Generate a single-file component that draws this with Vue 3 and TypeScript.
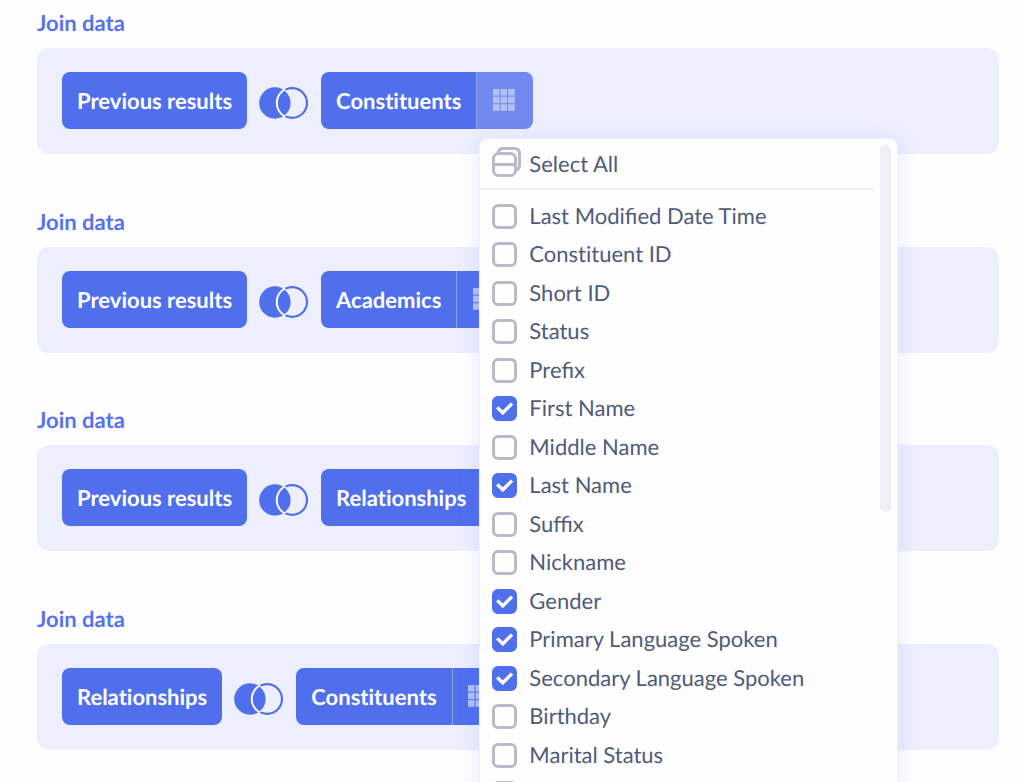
<script setup lang="ts">
import { ref } from 'vue'

interface Join {
  left: string
  right: string
  open: boolean
}

interface Field {
  name: string
  checked: boolean
}

const joins: Join[] = [
  { left: 'Previous results', right: 'Constituents', open: true },
  { left: 'Previous results', right: 'Academics', open: false },
  { left: 'Previous results', right: 'Relationships', open: false },
  { left: 'Relationships', right: 'Constituents', open: false },
]

const fields = ref<Field[]>([
  { name: 'Last Modified Date Time', checked: false },
  { name: 'Constituent ID', checked: false },
  { name: 'Short ID', checked: false },
  { name: 'Status', checked: false },
  { name: 'Prefix', checked: false },
  { name: 'First Name', checked: true },
  { name: 'Middle Name', checked: false },
  { name: 'Last Name', checked: true },
  { name: 'Suffix', checked: false },
  { name: 'Nickname', checked: false },
  { name: 'Gender', checked: true },
  { name: 'Primary Language Spoken', checked: true },
  { name: 'Secondary Language Spoken', checked: true },
  { name: 'Birthday', checked: false },
  { name: 'Marital Status', checked: false },
  { name: '', checked: false },
])

function selectAll(): void {
  fields.value.forEach((f) => (f.checked = true))
}
</script>

<template>
  <main class="page">
    <section v-for="(join, i) in joins" :key="i" class="step">
      <h2 class="title">Join data</h2>
      <div class="panel">
        <button type="button" class="source">{{ join.left }}</button>
        <button type="button" class="join-type" aria-label="Left join">
          <svg width="50" height="32" viewBox="0 0 50 32" aria-hidden="true">
            <defs>
              <mask :id="'outside-' + i">
                <rect width="50" height="32" fill="#fff" />
                <circle cx="15.9" cy="16" r="17" fill="#000" />
              </mask>
            </defs>
            <circle cx="15.9" cy="16" r="15.7" fill="#506fed" />
            <circle class="overlap" cx="33.2" cy="16" r="15.4" fill="none" stroke="#fff" stroke-width="2" />
            <circle cx="33.2" cy="16" r="14.8" fill="none" stroke="#506fed" stroke-width="2.2" :mask="`url(#outside-${i})`" />
          </svg>
        </button>
        <div class="target">
          <button type="button" class="target-name">{{ join.right }}</button>
          <div class="columns">
            <button type="button" class="columns-toggle" :class="{ active: join.open }" aria-label="Columns" :aria-expanded="join.open">
              <svg width="22" height="22" viewBox="0 0 22 22" aria-hidden="true">
                <template v-for="r in 3" :key="r">
                  <rect v-for="c in 3" :key="c" :x="(c - 1) * 7.6" :y="(r - 1) * 7.6" width="6.6" height="6.6" />
                </template>
              </svg>
            </button>
            <div v-if="join.open" class="menu">
              <button type="button" class="select-all" @click="selectAll">
                <svg width="30" height="34" viewBox="0 0 30 34" fill="none" stroke="#b9bbc6" stroke-width="3" aria-hidden="true">
                  <rect x="1.5" y="6.5" width="22" height="22" rx="5" />
                  <path d="M1.5 17.5H23.5" />
                  <path d="M6 5.5C6.8 3 8.4 1.5 11 1.5H22.5Q27.5 1.5 27.5 6.5V18C27.5 21 26 22.8 23.5 23.5" />
                </svg>
                <span>Select All</span>
              </button>
              <ul class="fields">
                <li v-for="(field, n) in fields" :key="n">
                  <label>
                    <input v-model="field.checked" type="checkbox" />
                    <svg class="tick" width="25" height="25" viewBox="0 0 25 25" aria-hidden="true">
                      <path d="M5.2 11.4L10.8 16.8L20 7.6" fill="none" stroke="#fff" stroke-width="3.4" />
                    </svg>
                    <span class="name" :class="{ ligated: field.name.includes('fi') }">{{ field.name }}</span>
                  </label>
                </li>
              </ul>
              <div class="thumb"></div>
            </div>
          </div>
        </div>
      </div>
    </section>
  </main>
</template>

<style>
body {
  background: #fefeff;
}
</style>

<style scoped>
.page {
  box-sizing: border-box;
  height: 100vh;
  overflow: hidden;
  padding: 9px 25px 0 37px;
  font-family: Lato, 'Liberation Sans', sans-serif;
  font-size: 22px;
  font-variant-ligatures: none;
  text-rendering: geometricPrecision;
}

.step {
  margin-bottom: 54px;
}

.step:nth-child(even) {
  margin-bottom: 53px;
}

.title {
  margin: 0 0 11px;
  font-size: 22px;
  line-height: 28px;
  font-weight: 700;
  color: #5673ee;
}

.panel {
  display: flex;
  align-items: center;
  gap: 12px;
  padding: 24px 25px 25px;
  border-radius: 12px;
  background: #edeffd;
}

button {
  margin: 0;
  border: 0;
  font: inherit;
  font-variant-ligatures: inherit;
  text-rendering: inherit;
  cursor: pointer;
}

.source,
.target-name {
  height: 57px;
  padding: 0 15px;
  background: #506fed;
  color: #fff;
  font-weight: 700;
  white-space: nowrap;
}

.source {
  border-radius: 8px;
}

.join-type {
  display: flex;
  padding: 4px 0 0;
  background: none;
}

.overlap {
  clip-path: circle(17px at 15.9px 16px);
}

.target {
  display: flex;
}

.target-name {
  border-radius: 8px 0 0 8px;
}

.columns {
  position: relative;
}

.columns-toggle {
  display: flex;
  align-items: center;
  justify-content: center;
  width: 57px;
  height: 57px;
  padding: 0 3px 1px 0;
  border-left: 1px solid #8ea2f4;
  border-radius: 0 8px 8px 0;
  background: #506fed;
}

.columns-toggle rect {
  fill: #b3c0f8;
}

.columns-toggle.active {
  background: #7189ee;
}

.menu {
  position: absolute;
  z-index: 2;
  top: 67px;
  left: 4px;
  width: 417px;
  border-radius: 8px;
  background: #fefeff;
  box-shadow: 0 0 0 1px #eef1fb, 0 4px 22px rgba(80, 111, 237, 0.17);
  color: #505b78;
}

.select-all {
  display: flex;
  align-items: center;
  gap: 7px;
  width: 394px;
  height: 51px;
  padding: 0 0 0 12px;
  border-bottom: 2px solid #eff0f2;
  background: none;
  color: inherit;
}

.fields {
  margin: 0;
  padding: 7px 0 0;
  list-style: none;
}

.fields li {
  height: 38px;
}

.fields li:nth-child(even) {
  height: 39px;
}

.fields label {
  position: relative;
  display: flex;
  align-items: center;
  gap: 12px;
  height: 100%;
  padding-left: 12px;
}

.fields input {
  appearance: none;
  box-sizing: border-box;
  width: 25px;
  height: 25px;
  margin: 0;
  border: 3px solid #b9bbc6;
  border-radius: 6px;
  background: #fefeff;
}

.fields input:checked {
  border-color: #506fed;
  background: #506fed;
}

.name {
  padding-bottom: 2px;
}

.ligated {
  font-variant-ligatures: normal;
}

.tick {
  position: absolute;
  left: 12px;
  visibility: hidden;
  pointer-events: none;
}

input:checked + .tick {
  visibility: visible;
}

.thumb {
  position: absolute;
  top: 6px;
  right: 6px;
  width: 11px;
  height: 367px;
  border-radius: 6px;
  background: #edf1f5;
}
</style>
